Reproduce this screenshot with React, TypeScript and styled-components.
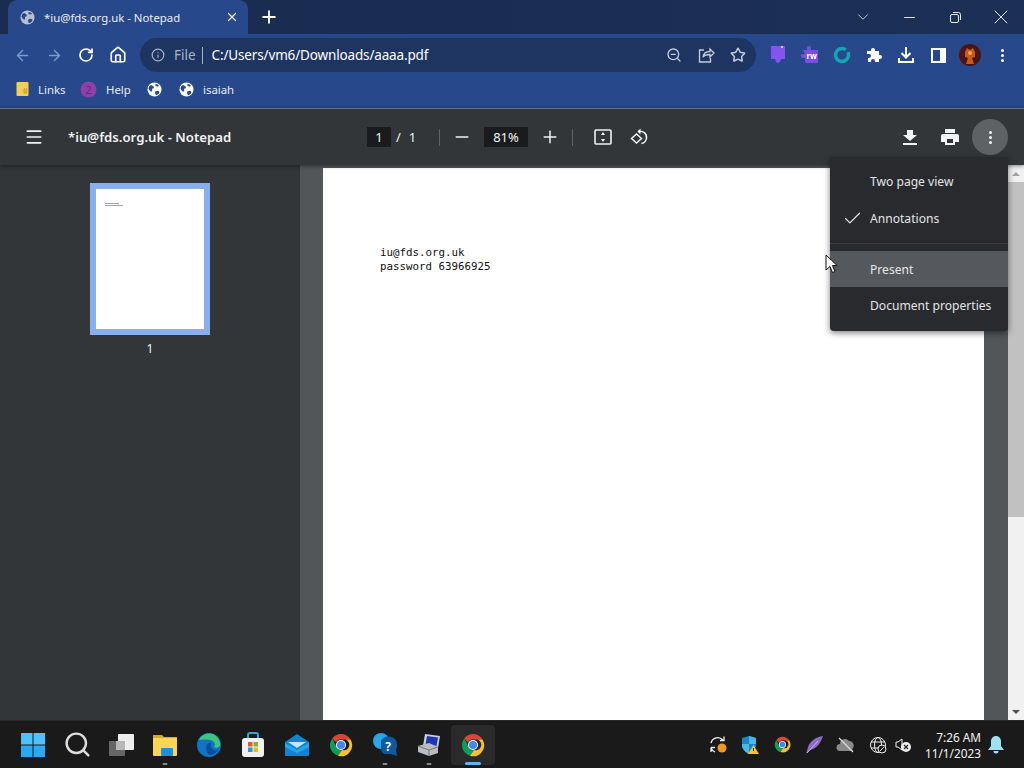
import { ReactNode } from "react"
import styled, { createGlobalStyle } from "styled-components"
import { ArrowLeft, ArrowRight, RotateCw, Home, Info, ZoomOut, Star, Minus, Plus, X, ChevronDown, Menu as MenuIcon, Check, Search } from "lucide-react"

const Global = createGlobalStyle`
  html, body { margin: 0; padding: 0; background: #323639; overflow: hidden; }
  * { box-sizing: border-box; }
  body { font-family: "Noto Sans", "Open Sans", sans-serif; }
  svg { flex-shrink: 0; }
`

const Screen = styled.div`
  position: relative;
  width: 1024px;
  height: 768px;
  display: flex;
  flex-direction: column;
  overflow: hidden;
`

/* browser chrome */
const TabStrip = styled.div`
  height: 34px;
  display: flex;
  align-items: stretch;
  padding-left: 8px;
  background: linear-gradient(90deg, #1a2b50, #1b2d52 60%, #1c3056);
  color: #fff;
`
const Tab = styled.div`
  width: 240px;
  display: flex;
  align-items: center;
  padding: 0 9px 0 12px;
  background: #27488a;
  border-radius: 9px 9px 0 0;
  font-size: 11.35px;
  color: #e8edf6;
`
const TabTitle = styled.span`
  margin-left: 9px;
  flex: 1;
  white-space: nowrap;
`
const NewTab = styled.div`
  width: 42px;
  display: flex;
  align-items: center;
  justify-content: center;
`
const WindowControls = styled.div`
  margin-left: auto;
  display: flex;
`
const WindowButton = styled.div`
  width: 46px;
  display: flex;
  align-items: center;
  justify-content: center;
  color: #e6e9f0;
`
const Toolbar = styled.div`
  height: 42px;
  display: flex;
  align-items: flex-end;
  padding: 0 6px 4px 6px;
  background: #27488a;
`
const NavButton = styled.div<{ $dim?: boolean }>`
  width: 32px;
  height: 34px;
  display: flex;
  align-items: center;
  justify-content: center;
  color: ${p => (p.$dim ? "#7d9ad0" : "#fff")};
`
const Omnibox = styled.div`
  width: 616px;
  height: 34px;
  margin-left: 6px;
  margin-right: 6px;
  display: flex;
  align-items: center;
  padding: 0 2px 0 11px;
  border-radius: 17px;
  background: #1e3562;
  font-size: 13.5px;
  color: #fff;
`
const FileLabel = styled.span`
  margin-left: 9px;
  color: #a9b4c8;
`
const OmniDivider = styled.span`
  width: 1px;
  height: 17px;
  margin: 0 9px 0 6px;
  background: #a9b4c8;
`
const OmniUrl = styled.span`
  flex: 1;
  letter-spacing: -0.15px;
`
const OmniAction = styled.div`
  width: 32px;
  display: flex;
  justify-content: center;
  color: #c4cede;
`
const BookmarkBar = styled.div`
  height: 32px;
  display: flex;
  align-items: center;
  padding: 0 0 5px 16px;
  background: #27488a;
  font-size: 11.4px;
  color: #e6ebf5;
`
const Bookmark = styled.div<{ $w: number }>`
  width: ${p => p.$w}px;
  display: flex;
  align-items: center;
  gap: 9px;
  white-space: nowrap;
`

/* pdf viewer */
const PdfBar = styled.div`
  height: 57px;
  display: flex;
  align-items: center;
  border-top: 1px solid #5f6f8c;
  background: #323639;
  box-shadow: 0 1px 4px rgba(0, 0, 0, 0.45);
  color: #f1f3f4;
  position: relative;
  z-index: 1;
`
const Hamburger = styled.div`
  width: 68px;
  padding-left: 24px;
  display: flex;
`
const DocTitle = styled.div`
  width: 299px;
  font-size: 13.2px;
  font-weight: 600;
  white-space: nowrap;
`
const NumBox = styled.div<{ $w: number }>`
  width: ${p => p.$w}px;
  height: 20px;
  display: flex;
  align-items: center;
  justify-content: center;
  background: #191b1c;
  font-size: 13px;
`
const PageTotal = styled.div`
  width: 48px;
  padding-left: 5px;
  font-size: 13px;
  word-spacing: 4.5px;
`
const BarDivider = styled.div`
  width: 1px;
  height: 17px;
  background: #5f6367;
`
const BarIcon = styled.div<{ $w: number }>`
  width: ${p => p.$w}px;
  display: flex;
  align-items: center;
  justify-content: center;
`
const BarRight = styled.div`
  margin-left: auto;
  padding-right: 16px;
  display: flex;
  align-items: center;
`
const KebabCircle = styled.div`
  width: 36px;
  height: 36px;
  margin-left: 2px;
  border-radius: 50%;
  background: #5f6265;
  display: flex;
  flex-direction: column;
  align-items: center;
  justify-content: center;
  gap: 2px;
`
const Dot = styled.span<{ $c?: string }>`
  width: 3px;
  height: 3px;
  border-radius: 50%;
  background: ${p => p.$c || "#f1f3f4"};
`
const DotsWrap = styled.div`
  display: flex;
  flex-direction: column;
  gap: 2px;
`
const Content = styled.div`
  flex: 1;
  min-height: 0;
  display: flex;
`
const Sidebar = styled.div`
  width: 300px;
  display: flex;
  flex-direction: column;
  align-items: center;
  padding-top: 18px;
  background: #323639;
  color: #f1f3f4;
  font-size: 12px;
`
const Thumb = styled.div`
  width: 120px;
  height: 152px;
  padding: 14px 9px;
  border: 6px solid #88aeee;
  background: #fff;
  display: flex;
  flex-direction: column;
  gap: 1px;
`
const ThumbLine = styled.span<{ $w: number }>`
  width: ${p => p.$w}px;
  height: 1px;
  background: #a5a5a5;
`
const ThumbLabel = styled.div`
  margin-top: 5px;
`
const Viewer = styled.div`
  flex: 1;
  display: flex;
  padding-top: 3px;
  background: #525659;
  padding-left: 23px;
  padding-right: 24px;
`
const PageSheet = styled.div`
  flex: 1;
  padding: 78px 0 0 57px;
  background: #fff;
  color: #111;
  font-family: "DejaVu Sans Mono", "Liberation Mono", monospace;
  font-size: 10.8px;
  line-height: 14px;
  white-space: pre;
`
const Scrollbar = styled.div`
  width: 16px;
  background: #f1f1f1;
  display: flex;
  flex-direction: column;
  align-items: center;
`
const ScrollArrow = styled.div<{ $up?: boolean }>`
  height: 17px;
  display: flex;
  align-items: center;
  &::before {
    content: "";
    border-left: 4px solid transparent;
    border-right: 4px solid transparent;
    ${p => (p.$up ? "border-bottom: 4px solid #a3a3a3;" : "border-top: 4px solid #505050;")}
  }
`
const ScrollThumb = styled.div`
  width: 16px;
  height: 335px;
  background: #c1c1c1;
`
const ScrollRest = styled.div`
  flex: 1;
`

/* overflow menu */
const Menu = styled.div`
  position: absolute;
  left: 830px;
  top: 157px;
  width: 178px;
  height: 174px;
  padding-top: 6px;
  background: #292a2d;
  border-radius: 0 0 4px 4px;
  box-shadow: 0 2px 6px rgba(0, 0, 0, 0.5);
  color: #e3e5e8;
  font-size: 12.1px;
  z-index: 2;
`
const MenuItem = styled.div<{ $hover?: boolean }>`
  position: relative;
  height: 36px;
  display: flex;
  align-items: center;
  padding-left: 40px;
  white-space: nowrap;
  background: ${p => (p.$hover ? "#55585c" : "transparent")};
  &:first-child {
    margin-bottom: 1px;
  }
`
const MenuCheck = styled.span`
  position: absolute;
  left: 12px;
  top: 8px;
  display: flex;
`
const MenuDivider = styled.div`
  height: 1px;
  margin: 7px 0 7px;
  background: #3c3d40;
`
const Cursor = styled.svg`
  position: absolute;
  left: 825px;
  top: 254px;
  z-index: 3;
`

/* windows taskbar */
const Taskbar = styled.div`
  height: 48px;
  display: flex;
  align-items: center;
  padding-left: 11px;
  background: #1a1a1a;
  border-top: 1px solid #2a2a2a;
  color: #f2f2f2;
`
const TaskSlot = styled.div<{ $active?: boolean }>`
  position: relative;
  width: 44px;
  height: 40px;
  display: flex;
  align-items: center;
  justify-content: center;
  border-radius: 4px;
  background: ${p => (p.$active ? "#2a2a2a" : "transparent")};
`
const RunDot = styled.span<{ $active?: boolean }>`
  position: absolute;
  bottom: 0;
  left: 50%;
  transform: translateX(-50%);
  width: ${p => (p.$active ? "16px" : "5px")};
  height: ${p => (p.$active ? "3px" : "2px")};
  border-radius: 2px;
  background: ${p => (p.$active ? "#5cb8f2" : "#8a8a8a")};
`
const Tray = styled.div`
  margin-left: auto;
  display: flex;
  align-items: center;
`
const TrayIcon = styled.div<{ $w: number }>`
  width: ${p => p.$w}px;
  display: flex;
  justify-content: center;
`
const Clock = styled.div`
  width: 69px;
  text-align: right;
  font-size: 11.8px;
  line-height: 16px;
  white-space: nowrap;
`
const Bell = styled.div`
  width: 43px;
  padding-right: 13px;
  display: flex;
  justify-content: center;
`

const GlobeIcon = ({ size = 15, bg = "#fff", fg = "#27488a" }: { size?: number; bg?: string; fg?: string }) => (
  <svg width={size} height={size} viewBox="0 0 16 16">
    <circle cx="8" cy="8" r="7.5" fill={bg} />
    <path d="M3 4c2-1 3 0 4 1s0 2-1 2 0 2-1 3-2-1-3-2 0-3 1-4zM9 10c1-1 3-1 4 0s-1 3-3 4c-1-1-2-3-1-4zM9 2c2 0 3 1 4 2-1 1-3 1-4 0z" fill={fg} />
  </svg>
)

const Chrome = ({ size = 24 }: { size?: number }) => (
  <svg width={size} height={size} viewBox="0 0 48 48">
    <path d="M24 2a22 22 0 0 1 19 11H24a11 11 0 0 0-10 6L6.500 11A22 22 0 0 1 24 2z" fill="#db4437" />
    <path d="M6.500 11 15 27a11 11 0 0 0 11 7l-8 11.500A22 22 0 0 1 6.500 11z" fill="#0f9d58" />
    <path d="M43 13a22 22 0 0 1-25 32.500L26 34a11 11 0 0 0 7-21z" fill="#fbc02d" />
    <circle cx="24" cy="24" r="10" fill="#fff" />
    <circle cx="24" cy="24" r="8" fill="#4285f4" />
  </svg>
)

const ShareBox = () => (
  <svg width="17" height="16" viewBox="0 0 17 16" fill="none" stroke="#c4cede" strokeWidth="1.300">
    <path d="M6 3H1.500v12h11v-4" />
    <path d="M5 10c.5-3.500 3-5.500 7-5.500V2l4 4-4 4V7.500c-3 0-5.500.5-7 2.500z" />
  </svg>
)
const ExtPurple = () => (
  <svg width="18" height="20" viewBox="0 0 18 20">
    <path d="M2 1h14v13h-4l-1 3-2 1-2-1-1-3H2z" fill="#8355ee" />
    <rect x="12" y="1" width="2" height="2" fill="#d8c8ff" />
  </svg>
)
const ExtRw = () => (
  <svg width="20" height="20" viewBox="0 0 20 20">
    <path d="M3 5h4V3a2 2 0 0 1 4 0v2h7v13H5v-5H3a2 2 0 0 1 0-4h2z" fill="#7a4fe0" />
    <text x="6.500" y="14" fontSize="8" fontWeight="700" fill="#fff" fontFamily="Noto Sans">rw</text>
  </svg>
)
const ExtRing = () => (
  <svg width="18" height="18" viewBox="0 0 18 18">
    <circle cx="9" cy="9" r="6.500" fill="none" stroke="#12a5b5" strokeWidth="3.500" strokeDasharray="36.500 4.300" transform="rotate(-25 9 9)" />
  </svg>
)
const Puzzle = () => (
  <svg width="16" height="16" viewBox="0 0 16 16">
    <path d="M1 4h4V3a2 2 0 0 1 4 0v1h4v4h1a2 2 0 0 1 0 4h-1v3H9v-1a2 2 0 0 0-4 0v1H2v-4h1a2 2 0 0 0 0-4H1z" fill="#fff" />
  </svg>
)
const DownloadTray = () => (
  <svg width="18" height="18" viewBox="0 0 18 18" fill="none" stroke="#fff" strokeWidth="2">
    <path d="M9 1v10M4.500 7 9 11.500 13.500 7M2 12v4h14v-4" />
  </svg>
)
const SidePanel = () => (
  <svg width="15" height="15" viewBox="0 0 15 15">
    <rect x="1" y="1" width="13" height="13" fill="none" stroke="#fff" strokeWidth="2" />
    <rect x="9" y="1" width="5" height="13" fill="#fff" />
  </svg>
)
const Avatar = () => (
  <svg width="22" height="22" viewBox="0 0 22 22">
    <circle cx="11" cy="11" r="11" fill="#4a1512" />
    <path d="M6 8l2-4 3 2 3-2 2 4v5l-3 1 2 6H7l2-6-3-1z" fill="#c9581a" />
    <circle cx="11" cy="9" r="2" fill="#e8a45e" />
  </svg>
)
const HelpBadge = () => (
  <svg width="17" height="17" viewBox="0 0 17 17">
    <circle cx="8.500" cy="8.500" r="8" fill="#8f3fa8" />
    <text x="8.500" y="12.500" fontSize="11" textAnchor="middle" fill="#5f2a84" fontFamily="Noto Sans">2</text>
  </svg>
)
const FolderNote = () => (
  <svg width="13" height="15" viewBox="0 0 12 15">
    <rect width="12" height="14" rx="1" fill="#f3cf58" />
    <path d="M6 8h5M6 10h5M8 6v6M10 6v6" stroke="#d6a52e" />
  </svg>
)

const FitPage = () => (
  <svg width="18" height="16" viewBox="0 0 18 16" fill="none">
    <rect x="1" y="1" width="16" height="14" rx="1" stroke="#f1f3f4" strokeWidth="1.600" />
    <path d="M9 3 11 6H7zM9 13 7 10h4z" fill="#f1f3f4" />
  </svg>
)
const RotatePage = () => (
  <svg width="18" height="18" viewBox="0 0 18 18" fill="none" stroke="#f1f3f4" strokeWidth="1.500">
    <path d="M6.500 6 1.500 10.500 6.500 15l5-4.500z" />
    <path d="M8 3.500c5-1 9 2 8.500 6.500-.3 3-2.500 5-5 5.500" />
    <path d="M10.500.5 7.500 3.500l3 3" fill="#f1f3f4" stroke="none" />
  </svg>
)
const PdfDownload = () => (
  <svg width="14" height="15" viewBox="0 0 14 15">
    <path d="M4 0h6v5h4L7 11 0 5h4zM0 13h14v2H0z" fill="#f1f3f4" />
  </svg>
)
const PdfPrint = () => (
  <svg width="18" height="16" viewBox="0 0 18 16">
    <path d="M4 0h10v4H4zM2 5h14a2 2 0 0 1 2 2v6h-4v3H4v-3H0V7a2 2 0 0 1 2-2z" fill="#f1f3f4" />
    <rect x="6" y="10" width="6" height="4" fill="#323639" />
  </svg>
)

const WinLogo = () => (
  <svg width="24" height="24" viewBox="0 0 24 24">
    <rect width="11.500" height="11.500" fill="#4cc2ff" />
    <rect x="12.500" width="11.500" height="11.500" fill="#4cc2ff" />
    <rect y="12.500" width="11.500" height="11.500" fill="#2aa8f0" />
    <rect x="12.500" y="12.500" width="11.500" height="11.500" fill="#2aa8f0" />
  </svg>
)
const TaskView = () => (
  <svg width="26" height="24" viewBox="0 0 26 24">
    <rect x="10" y="1" width="16" height="16" rx="1" fill="#eee" />
    <rect x="1" y="8" width="16" height="15" rx="1" fill="#666" />
    <rect x="8" y="8" width="9" height="9" fill="#b8b8b8" />
  </svg>
)
const Explorer = () => (
  <svg width="26" height="24" viewBox="0 0 26 24">
    <path d="M1 2h9l2 2h13v3H1z" fill="#d6a92b" />
    <rect x="1" y="5" width="24" height="18" rx="1" fill="#fcd353" />
    <rect x="9" y="15" width="12" height="8" rx="1" fill="#1b8fd8" />
  </svg>
)
const Edge = () => (
  <svg width="24" height="24" viewBox="0 0 24 24">
    <circle cx="12" cy="12" r="12" fill="#0f74c8" />
    <path d="M2 7a11 11 0 0 1 21 3c1 4-3 6-6 4 2-2 1-6-4-7-5-1-9 0-11 0z" fill="#3cc67c" />
    <path d="M9 14c0-3 3-5 6-4-2 1-2 5 2 7 1 .5 3 .5 4 0-2 4-7 6-10 4-1-2-2-4-2-7z" fill="#0b4f97" />
  </svg>
)
const Store = () => (
  <svg width="24" height="26" viewBox="0 0 24 26">
    <path d="M7 7V3a2 2 0 0 1 2-2h6a2 2 0 0 1 2 2v4" fill="none" stroke="#35a5c9" strokeWidth="2" />
    <rect x="1" y="6" width="22" height="19" rx="3" fill="#f1f1f1" />
    <rect x="7" y="10" width="4.500" height="4.500" fill="#e8562a" />
    <rect x="12.500" y="10" width="4.500" height="4.500" fill="#7eb72c" />
    <rect x="7" y="15.500" width="4.500" height="4.500" fill="#1f9be0" />
    <rect x="12.500" y="15.500" width="4.500" height="4.500" fill="#f7b818" />
  </svg>
)
const Mail = () => (
  <svg width="26" height="22" viewBox="0 0 26 22">
    <path d="M1 8 13 0l12 8v13a1 1 0 0 1-1 1H2a1 1 0 0 1-1-1z" fill="#0f84d4" />
    <path d="M4 8h18l-9 6z" fill="#bfe6fb" />
    <path d="M1 9l12 7 12-7v4l-12 6-12-6z" fill="#2aa5ea" />
  </svg>
)
const HelpChat = () => (
  <svg width="26" height="26" viewBox="0 0 26 26">
    <circle cx="9" cy="9" r="8" fill="#29a6e8" />
    <path d="M9 9a8.500 8.500 0 0 1 16 4c0 2-.5 4-1 5l1 6-6-2H13a6 6 0 0 1-4-5z" fill="#0f5a9e" />
    <text x="16" y="19" fontSize="12" fontWeight="700" textAnchor="middle" fill="#fff" fontFamily="Noto Sans">?</text>
  </svg>
)
const Gadget = () => (
  <svg width="24" height="24" viewBox="0 0 24 24">
    <path d="M8 1l15 2-2 12-15-2z" fill="#c8d0da" />
    <path d="M10 3l11 1.500-1.500 8.500-11-1.500z" fill="#1f35b8" />
    <path d="M1 13l11-3 9 4v6l-9 3-11-4z" fill="#b9bcc0" />
    <path d="M1 13l11 4 9-3M12 17v6" stroke="#777" fill="none" />
  </svg>
)

const SyncTray = () => (
  <svg width="20" height="20" viewBox="0 0 20 20" fill="none" stroke="#eee" strokeWidth="1.300">
    <path d="M3 8a7 7 0 0 1 12-3M16 1.500V5.500h-4M3 12.500V17M3 12.500h4M3 13a7 7 0 0 0 4 4" />
    <circle cx="14" cy="13" r="4.500" fill="#f09a1c" stroke="none" />
  </svg>
)
const ShieldTray = () => (
  <svg width="20" height="20" viewBox="0 0 20 20">
    <path d="M9 1l7 2v7c0 4-3 7-7 9-4-2-7-5-7-9V3z" fill="#1a86c8" />
    <path d="M9 1l7 2v6H9zM2 9h7v10c-4-2-7-5-7-9z" fill="#4bb6e8" />
    <path d="M13.500 10l5.500 9H8z" fill="#f6c331" />
    <path d="M13.500 13v3" stroke="#222" />
  </svg>
)
const Feather = () => (
  <svg width="20" height="20" viewBox="0 0 20 20">
    <path d="M19 1C12 2 6 6 4 12l-2 7c2-3 4-4 7-5 5-2 8-7 10-13z" fill="#8d6ac8" />
    <path d="M3 18 14 6" stroke="#c6b2e8" />
  </svg>
)
const OneDriveOff = () => (
  <svg width="20" height="18" viewBox="0 0 20 18">
    <path d="M4 15a3.500 3.500 0 0 1 0-7 5 5 0 0 1 9-3 4.500 4.500 0 0 1 3 8l1 2z" fill="#8a8a8a" />
    <path d="M3 2l14 14" stroke="#ddd" strokeWidth="1.300" />
  </svg>
)
const NetTray = () => (
  <svg width="18" height="18" viewBox="0 0 18 18" fill="none" stroke="#eee">
    <circle cx="9" cy="9" r="7.500" />
    <ellipse cx="9" cy="9" rx="3.500" ry="7.500" />
    <path d="M2 6h14M2 12h14" />
    <circle cx="13" cy="13" r="4" fill="#1a1a1a" />
    <path d="M11 15l4-4" />
  </svg>
)
const MuteTray = () => (
  <svg width="16" height="16" viewBox="0 0 16 16">
    <path d="M1 5h2l4-3v11L3 10H1z" fill="none" stroke="#eee" />
    <circle cx="11" cy="10" r="5" fill="#eee" />
    <path d="M9 8l4 4M13 8l-4 4" stroke="#222" strokeWidth="1.200" />
  </svg>
)
const BellIcon = () => (
  <svg width="16" height="18" viewBox="0 0 16 18">
    <path d="M8 0a5 5 0 0 1 5 5v5l3 4H0l3-4V5a5 5 0 0 1 5-5zM5.500 15h5a2.500 2.500 0 0 1-5 0z" fill="#9be3f2" />
  </svg>
)

const taskItems: { icon: ReactNode; running?: boolean; active?: boolean }[] = [
  { icon: <WinLogo /> },
  { icon: <Search size={29} color="#ddd" strokeWidth={2} /> },
  { icon: <TaskView /> },
  { icon: <Explorer />, running: true },
  { icon: <Edge /> },
  { icon: <Store /> },
  { icon: <Mail /> },
  { icon: <Chrome /> },
  { icon: <HelpChat />, running: true },
  { icon: <Gadget />, running: true },
  { icon: <Chrome />, active: true },
]

function Dots() {
  return (
    <DotsWrap>
      <Dot $c="#fff" />
      <Dot $c="#fff" />
      <Dot $c="#fff" />
    </DotsWrap>
  )
}

export default function App() {
  return (
    <Screen>
      <Global />
      <TabStrip>
        <Tab>
          <GlobeIcon size={15} bg="#b6c0d2" fg="#27488a" />
          <TabTitle>*iu@fds.org.uk - Notepad</TabTitle>
          <X size={14} strokeWidth={2.2} />
        </Tab>
        <NewTab>
          <Plus size={20} strokeWidth={2.2} />
        </NewTab>
        <WindowControls>
          <WindowButton><ChevronDown size={18} strokeWidth={1.1} /></WindowButton>
          <WindowButton><Minus size={17} strokeWidth={1.4} /></WindowButton>
          <WindowButton>
            <svg width="11" height="11" viewBox="0 0 11 11" fill="none" stroke="#e6e9f0">
              <rect x="0.500" y="2.500" width="8" height="8" rx="1.500" />
              <path d="M3 .5h5.500a2 2 0 0 1 2 2V8" />
            </svg>
          </WindowButton>
          <WindowButton><X size={24} strokeWidth={1} /></WindowButton>
        </WindowControls>
      </TabStrip>

      <Toolbar>
        <NavButton $dim><ArrowLeft size={17} strokeWidth={2} /></NavButton>
        <NavButton $dim><ArrowRight size={17} strokeWidth={2} /></NavButton>
        <NavButton><RotateCw size={16} strokeWidth={2.6} /></NavButton>
        <NavButton><Home size={18} strokeWidth={2.2} /></NavButton>
        <Omnibox>
          <Info size={14} color="#a9b4c8" />
          <FileLabel>File</FileLabel>
          <OmniDivider />
          <OmniUrl>C:/Users/vm6/Downloads/aaaa.pdf</OmniUrl>
          <OmniAction><ZoomOut size={16} /></OmniAction>
          <OmniAction><ShareBox /></OmniAction>
          <OmniAction><Star size={16} strokeWidth={2.2} /></OmniAction>
        </Omnibox>
        <NavButton><ExtPurple /></NavButton>
        <NavButton><ExtRw /></NavButton>
        <NavButton><ExtRing /></NavButton>
        <NavButton><Puzzle /></NavButton>
        <NavButton><DownloadTray /></NavButton>
        <NavButton><SidePanel /></NavButton>
        <NavButton><Avatar /></NavButton>
        <NavButton>
          <Dots />
        </NavButton>
      </Toolbar>

      <BookmarkBar>
        <Bookmark $w={64}><FolderNote />Links</Bookmark>
        <Bookmark $w={67}><HelpBadge />Help</Bookmark>
        <Bookmark $w={32}><GlobeIcon /></Bookmark>
        <Bookmark $w={80}><GlobeIcon />isaiah</Bookmark>
      </BookmarkBar>

      <PdfBar>
        <Hamburger><MenuIcon size={20} strokeWidth={2} /></Hamburger>
        <DocTitle>*iu@fds.org.uk - Notepad</DocTitle>
        <NumBox $w={24}>1</NumBox>
        <PageTotal>/ 1</PageTotal>
        <BarDivider />
        <BarIcon $w={44}><Minus size={20} strokeWidth={1.8} /></BarIcon>
        <NumBox $w={44}>81%</NumBox>
        <BarIcon $w={44}><Plus size={20} strokeWidth={1.8} /></BarIcon>
        <BarDivider />
        <BarIcon $w={60}><FitPage /></BarIcon>
        <BarIcon $w={12}><RotatePage /></BarIcon>
        <BarRight>
          <BarIcon $w={40}><PdfDownload /></BarIcon>
          <BarIcon $w={40}><PdfPrint /></BarIcon>
          <KebabCircle><Dot /><Dot /><Dot /></KebabCircle>
        </BarRight>
      </PdfBar>

      <Content>
        <Sidebar>
          <Thumb>
            <ThumbLine $w={14} />
            <ThumbLine $w={18} />
          </Thumb>
          <ThumbLabel>1</ThumbLabel>
        </Sidebar>
        <Viewer>
          <PageSheet>{"iu@fds.org.uk\npassword 63966925"}</PageSheet>
        </Viewer>
        <Scrollbar>
          <ScrollArrow $up />
          <ScrollThumb />
          <ScrollRest />
          <ScrollArrow />
        </Scrollbar>
      </Content>

      <Taskbar>
        {taskItems.map((t, i) => (
          <TaskSlot key={i} $active={t.active}>
            {t.icon}
            {(t.running || t.active) && <RunDot $active={t.active} />}
          </TaskSlot>
        ))}
        <Tray>
          <TrayIcon $w={32}><SyncTray /></TrayIcon>
          <TrayIcon $w={32}><ShieldTray /></TrayIcon>
          <TrayIcon $w={32}><Chrome size={17} /></TrayIcon>
          <TrayIcon $w={32}><Feather /></TrayIcon>
          <TrayIcon $w={32}><OneDriveOff /></TrayIcon>
          <TrayIcon $w={32}><NetTray /></TrayIcon>
          <TrayIcon $w={18}><MuteTray /></TrayIcon>
          <Clock>7:26 AM<br />11/1/2023</Clock>
          <Bell><BellIcon /></Bell>
        </Tray>
      </Taskbar>

      <Menu>
        <MenuItem>Two page view</MenuItem>
        <MenuItem>
          <MenuCheck><Check size={21} strokeWidth={1.4} /></MenuCheck>
          Annotations
        </MenuItem>
        <MenuDivider />
        <MenuItem $hover>Present</MenuItem>
        <MenuItem>Document properties</MenuItem>
      </Menu>

      <Cursor width="13" height="20" viewBox="0 0 13 20">
        <path d="M1 1v15l4-3.500 2.500 6 2.500-1-2.500-6H12z" fill="#fff" stroke="#111" />
      </Cursor>
    </Screen>
  )
}
